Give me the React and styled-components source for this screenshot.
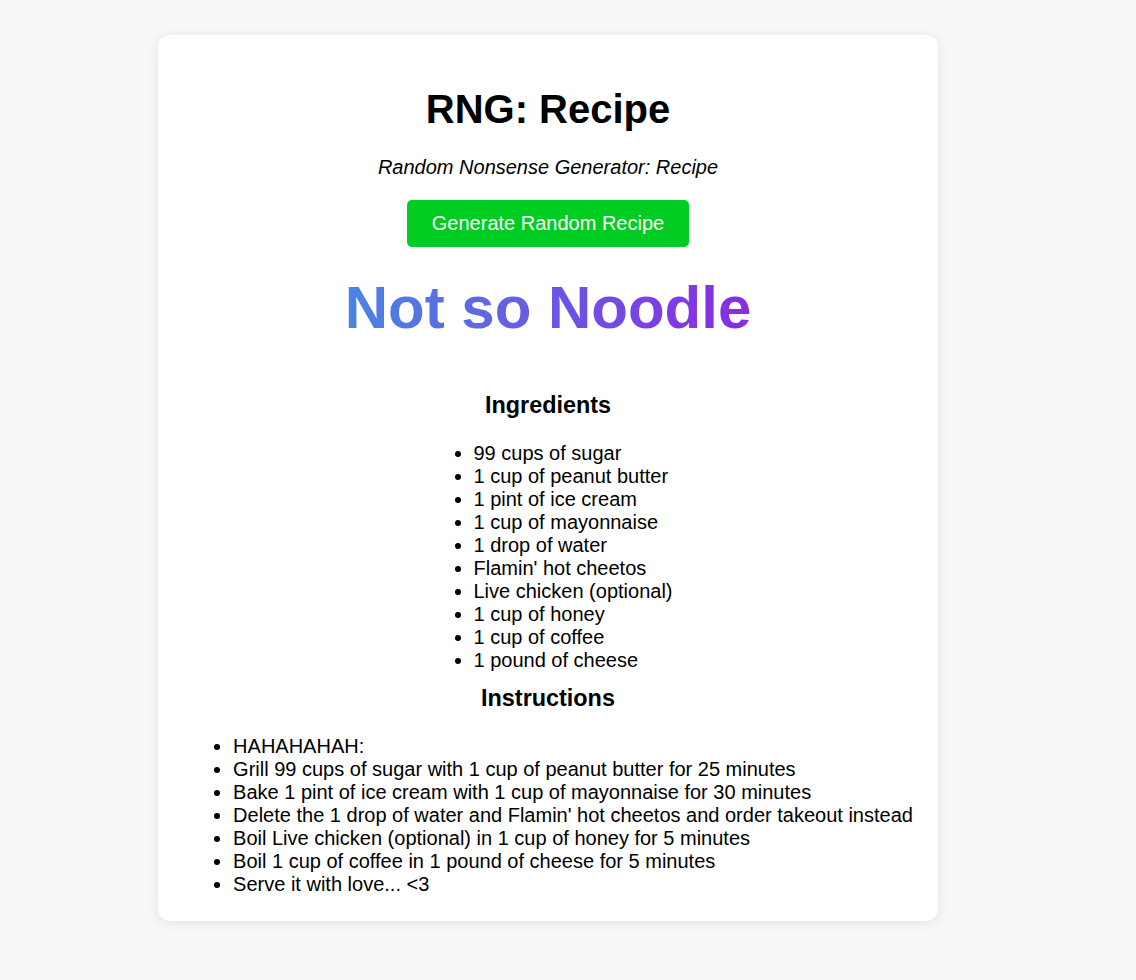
import React from "react";
import styled, { createGlobalStyle } from "styled-components";

const Global = createGlobalStyle`
  html, body { margin: 0; padding: 0; background: #f7f7f7; }
  body { font-family: "Liberation Sans", Arial, sans-serif; font-size: 20px; color: #000; }
`;

const Page = styled.div`
  padding: 35px 0 60px 158px;
`;

const Card = styled.main`
  width: 780px;
  box-sizing: border-box;
  background: #fff;
  border-radius: 12px;
  box-shadow: 0 2px 12px rgba(0, 0, 0, 0.08);
  padding: 25px 20px 25px;
  display: flex;
  flex-direction: column;
  align-items: center;
  text-align: center;
`;

const Title = styled.h1`
  font-size: 40px;
  font-weight: bold;
  margin: 27px 0 24px;
`;

const Subtitle = styled.p`
  font-style: italic;
  margin: 0 0 21px;
`;

const Button = styled.button`
  font-family: inherit;
  font-size: 20px;
  color: #fff;
  background: #00cc22;
  border: none;
  border-radius: 5px;
  padding: 12px 25px;
  line-height: 23px;
  cursor: pointer;
  margin: 0 0 26px;
`;

const RecipeName = styled.h2`
  font-size: 60px;
  font-weight: bold;
  margin: 0 0 50px;
  display: inline-block;
  background: linear-gradient(to right, #4a85e2, #8a2be2);
  -webkit-background-clip: text;
  background-clip: text;
  color: transparent;
`;

const SectionTitle = styled.h3`
  font-size: 23.4px;
  font-weight: bold;
  margin: 0 0 23px;
`;

const List = styled.ul`
  text-align: left;
  margin: 0 0 ${(p) => p.$after}px ${(p) => p.$shift}px;
  padding: 0 0 0 40px;
  line-height: 23px;
`;

const ingredients = [
  "99 cups of sugar",
  "1 cup of peanut butter",
  "1 pint of ice cream",
  "1 cup of mayonnaise",
  "1 drop of water",
  "Flamin' hot cheetos",
  "Live chicken (optional)",
  "1 cup of honey",
  "1 cup of coffee",
  "1 pound of cheese",
];

const instructions = [
  "HAHAHAHAH:",
  "Grill 99 cups of sugar with 1 cup of peanut butter for 25 minutes",
  "Bake 1 pint of ice cream with 1 cup of mayonnaise for 30 minutes",
  "Delete the 1 drop of water and Flamin' hot cheetos and order takeout instead",
  "Boil Live chicken (optional) in 1 cup of honey for 5 minutes",
  "Boil 1 cup of coffee in 1 pound of cheese for 5 minutes",
  "Serve it with love... <3",
];

export default function App() {
  return (
    <>
      <Global />
      <Page>
        <Card>
          <Title>RNG: Recipe</Title>
          <Subtitle>Random Nonsense Generator: Recipe</Subtitle>
          <Button>Generate Random Recipe</Button>
          <RecipeName>Not so Noodle</RecipeName>
          <SectionTitle>Ingredients</SectionTitle>
          <List $after={13} $shift={10}>
            {ingredients.map((t) => (
              <li key={t}>{t}</li>
            ))}
          </List>
          <SectionTitle>Instructions</SectionTitle>
          <List $after={0} $shift={10}>
            {instructions.map((t) => (
              <li key={t}>{t}</li>
            ))}
          </List>
        </Card>
      </Page>
    </>
  );
}
